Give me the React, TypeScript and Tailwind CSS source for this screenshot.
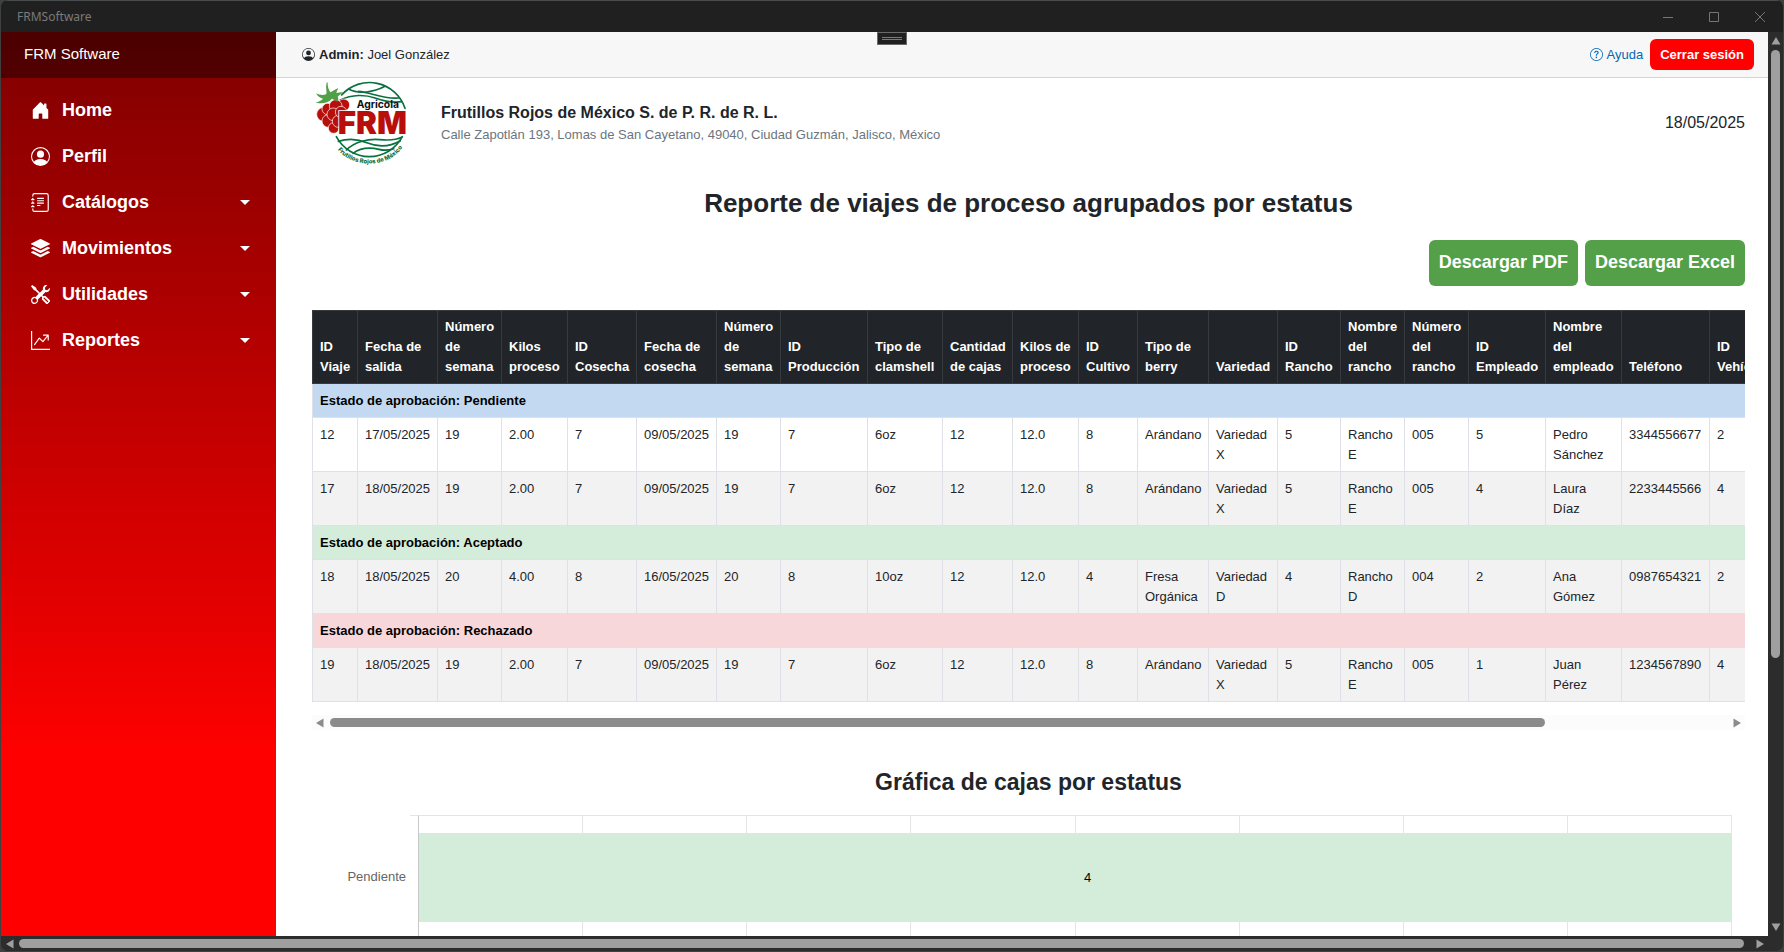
import React from 'react';
import {
  BsGraphUpArrow,
  BsHouseDoorFill,
  BsJournalText,
  BsPersonCircle,
  BsQuestionCircle,
  BsStack,
  BsTools,
} from 'react-icons/bs';
import type { IconType } from 'react-icons';

type MenuItem = { label: string; icon: IconType; expandable: boolean };

const menu: MenuItem[] = [
  { label: 'Home', icon: BsHouseDoorFill, expandable: false },
  { label: 'Perfil', icon: BsPersonCircle, expandable: false },
  { label: 'Catálogos', icon: BsJournalText, expandable: true },
  { label: 'Movimientos', icon: BsStack, expandable: true },
  { label: 'Utilidades', icon: BsTools, expandable: true },
  { label: 'Reportes', icon: BsGraphUpArrow, expandable: true },
];

const columns: { title: string; width: number }[] = [
  { title: 'ID Viaje', width: 45 },
  { title: 'Fecha de salida', width: 80 },
  { title: 'Número de semana', width: 64 },
  { title: 'Kilos proceso', width: 66 },
  { title: 'ID Cosecha', width: 69 },
  { title: 'Fecha de cosecha', width: 80 },
  { title: 'Número de semana', width: 64 },
  { title: 'ID Producción', width: 87 },
  { title: 'Tipo de clamshell', width: 75 },
  { title: 'Cantidad de cajas', width: 70 },
  { title: 'Kilos de proceso', width: 66 },
  { title: 'ID Cultivo', width: 59 },
  { title: 'Tipo de berry', width: 71 },
  { title: 'Variedad', width: 69 },
  { title: 'ID Rancho', width: 63 },
  { title: 'Nombre del rancho', width: 64 },
  { title: 'Número del rancho', width: 64 },
  { title: 'ID Empleado', width: 77 },
  { title: 'Nombre del empleado', width: 76 },
  { title: 'Teléfono', width: 88 },
  { title: 'ID Vehículo', width: 74 },
];

const groups: { status: string; band: string; rows: { shade: string; cells: string[] }[] }[] = [
  {
    status: 'Pendiente',
    band: 'bg-[#c3d9f1]',
    rows: [
      {
        shade: 'bg-white',
        cells: ['12', '17/05/2025', '19', '2.00', '7', '09/05/2025', '19', '7', '6oz', '12', '12.0', '8', 'Arándano', 'Variedad X', '5', 'Rancho E', '005', '5', 'Pedro Sánchez', '3344556677', '2'],
      },
      {
        shade: 'bg-[#f2f2f2]',
        cells: ['17', '18/05/2025', '19', '2.00', '7', '09/05/2025', '19', '7', '6oz', '12', '12.0', '8', 'Arándano', 'Variedad X', '5', 'Rancho E', '005', '4', 'Laura Díaz', '2233445566', '4'],
      },
    ],
  },
  {
    status: 'Aceptado',
    band: 'bg-[#d4edda]',
    rows: [
      {
        shade: 'bg-[#f2f2f2]',
        cells: ['18', '18/05/2025', '20', '4.00', '8', '16/05/2025', '20', '8', '10oz', '12', '12.0', '4', 'Fresa Orgánica', 'Variedad D', '4', 'Rancho D', '004', '2', 'Ana Gómez', '0987654321', '2'],
      },
    ],
  },
  {
    status: 'Rechazado',
    band: 'bg-[#f8d7da]',
    rows: [
      {
        shade: 'bg-[#f2f2f2]',
        cells: ['19', '18/05/2025', '19', '2.00', '7', '09/05/2025', '19', '7', '6oz', '12', '12.0', '8', 'Arándano', 'Variedad X', '5', 'Rancho E', '005', '1', 'Juan Pérez', '1234567890', '4'],
      },
    ],
  },
];

function Logo() {
  return (
    <svg viewBox="42 33 288 258" className="h-[86px] w-24 shrink-0" role="img" aria-label="Agrícola FRM">
      <g fill="none" stroke="#0a7040" strokeWidth="5" strokeLinecap="round">
        <path d="M128 75A112 112 0 0 1 318 115" />
        <path d="M150 58C180 74 225 66 258 49" />
        <path d="M178 64C215 66 250 88 298 84" />
        <path d="M124 90C160 72 200 74 228 84C262 96 290 98 308 95" />
        <path d="M112 200A112 112 0 0 0 310 200" />
        <path d="M118 214C150 204 180 208 206 219C236 231 270 232 304 212" />
        <path d="M142 240C168 214 208 206 242 209C268 211 290 212 308 202" />
        <path d="M162 250C186 232 214 232 240 238C258 243 272 240 284 236" />
      </g>
      <g fill="#b90f0a" stroke="#fff" strokeWidth="2">
        <circle cx="134" cy="105" r="18" />
        <circle cx="74" cy="133" r="21" />
        <circle cx="88" cy="153" r="19" />
        <circle cx="104" cy="174" r="16" />
        <circle cx="86" cy="117" r="17" />
        <circle cx="110" cy="108" r="19" />
        <circle cx="103" cy="133" r="19" />
        <circle cx="118" cy="154" r="18" />
        <circle cx="126" cy="126" r="17" />
      </g>
      <path
        d="M86 37C85 50 89 59 94 67C102 63 110 57 118 54C115 61 113 65 112 69C120 67 127 66 133 67C126 72 121 76 116 80C119 85 118 90 116 95C108 91 103 88 98 86C92 97 72 101 49 99C60 95 67 91 72 86C64 84 57 80 51 70C64 76 74 76 82 72C84 62 79 52 83 38Z"
        fill="#4fa046"
      />
      <text
        x="116"
        y="191"
        className="font-['Inter',sans-serif] text-[94px] font-black"
        fill="#b90f0a"
        stroke="#fff"
        strokeWidth="5"
        paintOrder="stroke"
      >
        FRM
      </text>
      <text x="173" y="113" className="font-['Inter',sans-serif] text-[31px] font-bold" fill="#111">
        Agricola
      </text>
      <path id="logo-arc" d="M116 239C160 294 264 296 308 235" fill="none" />
      <text className="font-['Inter',sans-serif] text-[18px] font-extrabold" fill="#0a7040">
        <textPath href="#logo-arc">Frutillos Rojos de México</textPath>
      </text>
    </svg>
  );
}

function Arrow({ direction, className }: { direction: 'up' | 'down' | 'left' | 'right'; className: string }) {
  const paths = {
    up: 'M5 1L9.500 8.500H.5Z',
    down: 'M5 9L9.500 1.500H.5Z',
    left: 'M1 5L8.500 .5V9.500Z',
    right: 'M9 5L1.500 .5V9.500Z',
  };
  return (
    <svg viewBox="0 0 10 10" className={className} aria-hidden="true">
      <path d={paths[direction]} fill="currentColor" />
    </svg>
  );
}

function TitleBar() {
  return (
    <div className="flex h-8 shrink-0 items-center justify-between border-t border-[#4a4d4d] bg-[#202020] pr-[18px] pl-4">
      <span className="pt-px font-['Noto_Sans',sans-serif] text-xs text-[#7a7a7a]">FRMSoftware</span>
      <div className="flex gap-9 text-[#767676]">
        {['M0 5.500H10', 'M.5 .5H9.500V9.500H.5Z', 'M0 0L10 10M10 0L0 10'].map((d, i) => (
          <button key={d} type="button" aria-label={['Minimizar', 'Maximizar', 'Cerrar'][i]}>
            <svg viewBox="0 0 10 10" className="size-[10px]">
              <path d={d} fill="none" stroke="currentColor" />
            </svg>
          </button>
        ))}
      </div>
    </div>
  );
}

function Sidebar() {
  return (
    <aside className="flex w-[275px] shrink-0 flex-col bg-linear-to-b from-[#800000] to-[#ff0000] to-80%">
      <div className="flex h-[46px] items-center bg-black/40 pb-[2px] pl-[23px] text-[15px] text-white">FRM Software</div>
      <nav className="flex flex-col pt-[9px] text-white">
        {menu.map(({ label, icon: Icon, expandable }) => (
          <a key={label} href="#" className="flex h-[46px] items-center pr-[26px] pl-[30px] text-lg font-bold">
            <Icon className="mr-3 size-[19px]" />
            {label}
            {expandable && (
              <svg viewBox="0 0 10 5" className="ml-auto w-[10px]" aria-hidden="true">
                <path d="M0 0H10L5 5Z" fill="currentColor" />
              </svg>
            )}
          </a>
        ))}
      </nav>
    </aside>
  );
}

function TopBar() {
  return (
    <header className="flex h-[46px] shrink-0 items-center justify-between border-b border-[#d6d5d5] bg-[#f7f7f7] pr-[14px] pl-[26px]">
      <div className="flex items-center gap-1 text-[13px]">
        <BsPersonCircle className="size-[13px]" />
        <span>
          <b>Admin:</b> Joel González
        </span>
      </div>
      <div className="flex items-center gap-[7px]">
        <a href="#" className="flex items-center gap-1 text-[13px] text-[#0069b8]">
          <BsQuestionCircle className="size-[13px]" />
          Ayuda
        </a>
        <button type="button" className="h-[31px] rounded-md bg-[#ff0000] px-[10px] text-[13px] font-bold text-white">
          Cerrar sesión
        </button>
      </div>
    </header>
  );
}

function ReportTable() {
  return (
    <section aria-label="Viajes de proceso">
      <div className="overflow-hidden">
        <table className="table-fixed border-collapse text-[13px] leading-5" style={{ width: columns.reduce((sum, c) => sum + c.width, 0) }}>
          <colgroup>
            {columns.map((c, i) => (
              <col key={i} style={{ width: c.width }} />
            ))}
          </colgroup>
          <thead className="bg-[#212529] text-white">
            <tr className="h-[73px]">
              {columns.map((c, i) => (
                <th key={i} scope="col" className="border border-[#373b3e] px-[7px] py-[6px] text-left align-bottom font-bold">
                  {c.title}
                </th>
              ))}
            </tr>
          </thead>
          {groups.map((g) => (
            <tbody key={g.status}>
              <tr className={g.band}>
                <th scope="rowgroup" colSpan={columns.length} className="border border-[#dee2e6] px-[7px] pt-[7px] pb-[6px] text-left font-bold text-black">
                  Estado de aprobación: {g.status}
                </th>
              </tr>
              {g.rows.map((r) => (
                <tr key={r.cells[0]} className={r.shade}>
                  {r.cells.map((cell, i) => (
                    <td key={i} className="border border-[#dee2e6] px-[7px] pt-[7px] pb-[6px] align-top">
                      {cell}
                    </td>
                  ))}
                </tr>
              ))}
            </tbody>
          ))}
        </table>
      </div>
      <div className="mt-[13px] flex h-[15px] items-center bg-[#fcfcfc] px-[3px] text-[#8b8b8b]">
        <Arrow direction="left" className="size-[10px]" />
        <div className="mx-[5px] flex-1">
          <div className="h-[9px] w-[87%] rounded-full bg-[#8b8b8b]" />
        </div>
        <Arrow direction="right" className="size-[10px]" />
      </div>
    </section>
  );
}

function BoxesChart() {
  return (
    <section className="mt-[37px]">
      <h2 className="text-center text-[23px] leading-[30px] font-bold">Gráfica de cajas por estatus</h2>
      <div className="mt-[18px] mr-[13px] flex">
        <div className="flex h-[124px] w-[98px] shrink-0 items-center justify-end pr-1 text-[13px] text-[#666]">Pendiente</div>
        <div className="w-2 shrink-0 border-t border-[#e5e5e5]" />
        <div className="relative grid h-[300px] flex-1 grid-cols-8 border-t border-l border-t-[#e5e5e5] border-l-[#c8c8c8]">
          {Array.from({ length: 8 }, (_, i) => (
            <div key={i} className="border-r border-[#e5e5e5]" />
          ))}
          <div className="absolute inset-x-0 top-[17px] flex h-[89px] items-center justify-center rounded-r-xs bg-[#d4edda] pl-6 text-[13px] text-black">
            4
          </div>
        </div>
      </div>
    </section>
  );
}

function Report() {
  return (
    <div className="flex min-h-0 flex-1 flex-col overflow-hidden bg-white pr-[23px] pl-9">
      <div className="mt-[3px] flex shrink-0 items-center pl-px">
        <Logo />
        <div className="ml-8 flex-1 pb-[2px]">
          <p className="text-base leading-6 font-bold">Frutillos Rojos de México S. de P. R. de R. L.</p>
          <p className="text-[13px] leading-5 text-[#6c757d]">Calle Zapotlán 193, Lomas de San Cayetano, 49040, Ciudad Guzmán, Jalisco, México</p>
        </div>
        <p className="pb-[2px] text-base">18/05/2025</p>
      </div>
      <h1 className="mt-5 shrink-0 text-center text-[26px] leading-8 font-bold">Reporte de viajes de proceso agrupados por estatus</h1>
      <div className="mt-[21px] mb-6 flex shrink-0 justify-end gap-[7px]">
        {['Descargar PDF', 'Descargar Excel'].map((label) => (
          <button key={label} type="button" className="h-[46px] rounded-md bg-[#54a048] px-[10px] pb-[2px] text-lg font-bold text-white">
            {label}
          </button>
        ))}
      </div>
      <ReportTable />
      <BoxesChart />
    </div>
  );
}

export default function App() {
  return (
    <div className="h-screen bg-[#3f4040]">
      <div className="relative flex h-full flex-col overflow-hidden rounded-lg border-x border-b border-[#3f4040] bg-[#2c2c2c] font-['Liberation_Sans',Arial,sans-serif] text-[#212529]">
        <TitleBar />
        <div className="absolute top-8 left-1/2 flex h-[13px] w-[30px] -translate-x-1/2 flex-col items-center justify-center gap-px border border-[#6a6a6a] bg-[#202020]">
          <span className="h-px w-5 bg-[#7a7a7a]" />
          <span className="h-px w-5 bg-[#7a7a7a]" />
        </div>
        <div className="flex min-h-0 flex-1">
          <Sidebar />
          <main className="flex min-w-0 flex-1 flex-col">
            <TopBar />
            <Report />
          </main>
          <div className="flex w-[15px] shrink-0 flex-col items-center py-1 text-[#9f9f9f]">
            <Arrow direction="up" className="size-[10px]" />
            <div className="my-1 w-[9px] flex-1">
              <div className="h-[70%] rounded-full bg-[#9f9f9f]" />
            </div>
            <Arrow direction="down" className="size-[10px]" />
          </div>
        </div>
        <div className="flex h-[15px] shrink-0 items-center pr-[18px] pl-1 text-[#9f9f9f]">
          <Arrow direction="left" className="size-[10px]" />
          <div className="mr-[11px] ml-1 h-[9px] flex-1 rounded-full bg-[#9f9f9f]" />
          <Arrow direction="right" className="size-[10px]" />
        </div>
      </div>
    </div>
  );
}
